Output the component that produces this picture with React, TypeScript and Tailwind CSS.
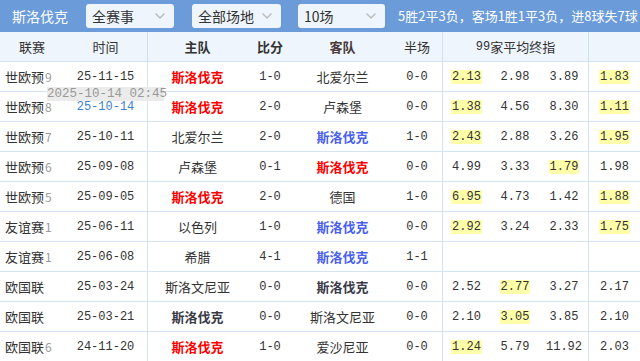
import { ChevronDown } from "lucide-react";

type Row = {
  league: string;
  round?: string;
  date: string;
  home: string;
  score: string;
  away: string;
  half: string;
  odds: string[];
  hl: number[];
  result: "w" | "d" | "l";
  homeIsUs: boolean;
  dateActive?: boolean;
};

const rows: Row[] = [
  { league: "世欧预", round: "9", date: "25-11-15", home: "斯洛伐克", score: "1-0", away: "北爱尔兰", half: "0-0", odds: ["2.13", "2.98", "3.89", "1.83"], hl: [0, 3], result: "w", homeIsUs: true },
  { league: "世欧预", round: "8", date: "25-10-14", home: "斯洛伐克", score: "2-0", away: "卢森堡", half: "0-0", odds: ["1.38", "4.56", "8.30", "1.11"], hl: [0, 3], result: "w", homeIsUs: true, dateActive: true },
  { league: "世欧预", round: "7", date: "25-10-11", home: "北爱尔兰", score: "2-0", away: "斯洛伐克", half: "1-0", odds: ["2.43", "2.88", "3.26", "1.95"], hl: [0, 3], result: "l", homeIsUs: false },
  { league: "世欧预", round: "6", date: "25-09-08", home: "卢森堡", score: "0-1", away: "斯洛伐克", half: "0-0", odds: ["4.99", "3.33", "1.79", "1.98"], hl: [2], result: "w", homeIsUs: false },
  { league: "世欧预", round: "5", date: "25-09-05", home: "斯洛伐克", score: "2-0", away: "德国", half: "1-0", odds: ["6.95", "4.73", "1.42", "1.88"], hl: [0, 3], result: "w", homeIsUs: true },
  { league: "友谊赛", round: "1", date: "25-06-11", home: "以色列", score: "1-0", away: "斯洛伐克", half: "0-0", odds: ["2.92", "3.24", "2.33", "1.75"], hl: [0, 3], result: "l", homeIsUs: false },
  { league: "友谊赛", round: "1", date: "25-06-08", home: "希腊", score: "4-1", away: "斯洛伐克", half: "1-1", odds: ["", "", "", ""], hl: [], result: "l", homeIsUs: false },
  { league: "欧国联", date: "25-03-24", home: "斯洛文尼亚", score: "0-0", away: "斯洛伐克", half: "0-0", odds: ["2.52", "2.77", "3.27", "2.17"], hl: [1], result: "d", homeIsUs: false },
  { league: "欧国联", date: "25-03-21", home: "斯洛伐克", score: "0-0", away: "斯洛文尼亚", half: "0-0", odds: ["2.10", "3.05", "3.85", "2.10"], hl: [1], result: "d", homeIsUs: true },
  { league: "欧国联", round: "6", date: "24-11-20", home: "斯洛伐克", score: "1-0", away: "爱沙尼亚", half: "0-0", odds: ["1.24", "5.79", "11.92", "2.03"], hl: [0], result: "w", homeIsUs: true },
];

const cn = "font-['Noto_Sans_CJK_SC',sans-serif]";
const mono = "font-['Liberation_Mono','Noto_Sans_CJK_SC',monospace] text-[12px]";
const grid = "grid grid-cols-[64px_83px_100px_46px_99px_50px_48px_50px_48px_52px] h-[30px] border-b border-[#d3e3f3] items-center";

const teamColor = (r: Row["result"]) =>
  r === "w" ? "text-[#ff0000]" : r === "l" ? "text-[#4a5ff0]" : "text-[#3a3a48]";

const Select = ({ label, w }: { label: string; w: string }) => (
  <div className={`${w} h-[24px] bg-[#eef5fd] rounded-[3px] flex items-center justify-between pl-[6px] pr-[6px] text-[14px] text-[#333]`}>
    <span>{label}</span>
    <ChevronDown className="w-[16px] h-[16px] text-[#b8b8b8]" strokeWidth={2} />
  </div>
);

const Team = ({ name, us, result }: { name: string; us: boolean; result: Row["result"] }) =>
  us ? (
    <span className={`font-bold ${teamColor(result)}`}>{name}</span>
  ) : (
    <span className="text-[#333]">{name}</span>
  );

const App = () => {
  return (
    <div className={`w-[640px] h-[361px] overflow-hidden bg-white ${cn} text-[13px] text-[#333]`}>
      <div className="h-[32px] bg-[#6b9bd9] flex items-center whitespace-nowrap">
        <span className="w-[86px] pl-[12px] text-[14px] text-white">斯洛伐克</span>
        <Select label="全赛事" w="w-[88px]" />
        <div className="w-[18px]" />
        <Select label="全部场地" w="w-[89px]" />
        <div className="w-[17px]" />
        <Select label="10场" w="w-[87px]" />
        <span className="ml-[13px] text-[13px] text-white">5胜2平3负，客场1胜1平3负，进8球失7球</span>
      </div>

      <div className={`${grid} bg-[#eef5fd] text-center`}>
        <div>联赛</div>
        <div className="h-full flex items-center justify-center">时间</div>
        <div className="h-full flex items-center justify-center border-l border-[#d3e3f3] font-bold">主队</div>
        <div className="font-bold">比分</div>
        <div className="font-bold text-[#4a3a3a]">客队</div>
        <div>半场</div>
        <div className="col-span-3 h-full flex items-center justify-center border-l border-[#d3e3f3]">
          <span className={mono}>99</span>家平均终指
        </div>
        <div className="h-full border-l border-[#d3e3f3]" />
      </div>

      {rows.map((r, i) => (
        <div key={i} className={`${grid} text-center`}>
          <div className="text-left pl-[5px] whitespace-nowrap">
            {r.league}
            {r.round && <span className="text-[#999] text-[12px] ml-[1px]">{r.round}</span>}
          </div>
          <div className={`relative h-full flex items-center justify-center ${mono} ${r.dateActive ? "text-[#3c7fd6]" : "text-[#333]"}`}>
            {r.date}
            {r.dateActive && (
              <div className="absolute left-[-17px] top-[-5px] w-[117px] h-[14px] bg-[#ebebeb] text-[#999] text-[12.5px] leading-[14px] text-center whitespace-nowrap">
                2025-10-14 02:45
              </div>
            )}
          </div>
          <div className="h-full flex items-center justify-center border-l border-[#d3e3f3]">
            <Team name={r.home} us={r.homeIsUs} result={r.result} />
          </div>
          <div className={mono}>{r.score}</div>
          <div className="whitespace-nowrap">
            <Team name={r.away} us={!r.homeIsUs} result={r.result} />
          </div>
          <div className={mono}>{r.half}</div>
          {r.odds.map((o, j) => (
            <div
              key={j}
              className={`h-full flex items-center justify-center ${j === 0 || j === 3 ? "border-l border-[#d3e3f3]" : ""}`}
            >
              {o && (
                <span className={`${mono} px-[1px] leading-[14px] ${r.hl.includes(j) ? "bg-[#ffffaa]" : ""}`}>{o}</span>
              )}
            </div>
          ))}
        </div>
      ))}
    </div>
  );
};

export default App;
